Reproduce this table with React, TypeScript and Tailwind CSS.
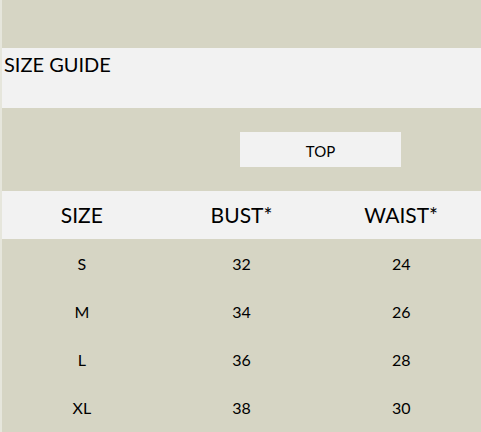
import React from 'react';

const rows = [
  { size: 'S', bust: '32', waist: '24' },
  { size: 'M', bust: '34', waist: '26' },
  { size: 'L', bust: '36', waist: '28' },
  { size: 'XL', bust: '38', waist: '30' },
];

const App = () => {
  return (
    <div className="w-[481px] h-[432px] overflow-hidden bg-[#d6d5c4] border-l-2 border-[#e6e6dc] text-black font-['Lato','Open_Sans',sans-serif]">
      <div className="h-[48px]" />

      <div className="h-[60px] bg-[#f2f2f2] pl-[2px] pt-[3px] text-[20px] leading-[26px]">
        SIZE GUIDE
      </div>

      <div className="h-[83px] pt-[24px]">
        <div className="ml-[238px] w-[161px] h-[35px] bg-[#f2f2f2] flex items-center justify-center text-[15px] pt-[3px]">
          TOP
        </div>
      </div>

      <div className="h-[48px] bg-[#f2f2f2] grid grid-cols-3 items-center text-[21px]">
        <div className="text-center">SIZE</div>
        <div className="text-center">BUST*</div>
        <div className="text-center">WAIST*</div>
      </div>

      {rows.map((r) => (
        <div key={r.size} className="h-[48px] grid grid-cols-3 items-center text-[16px] pt-[2px]">
          <div className="text-center">{r.size}</div>
          <div className="text-center">{r.bust}</div>
          <div className="text-center">{r.waist}</div>
        </div>
      ))}
    </div>
  );
};

export default App;
